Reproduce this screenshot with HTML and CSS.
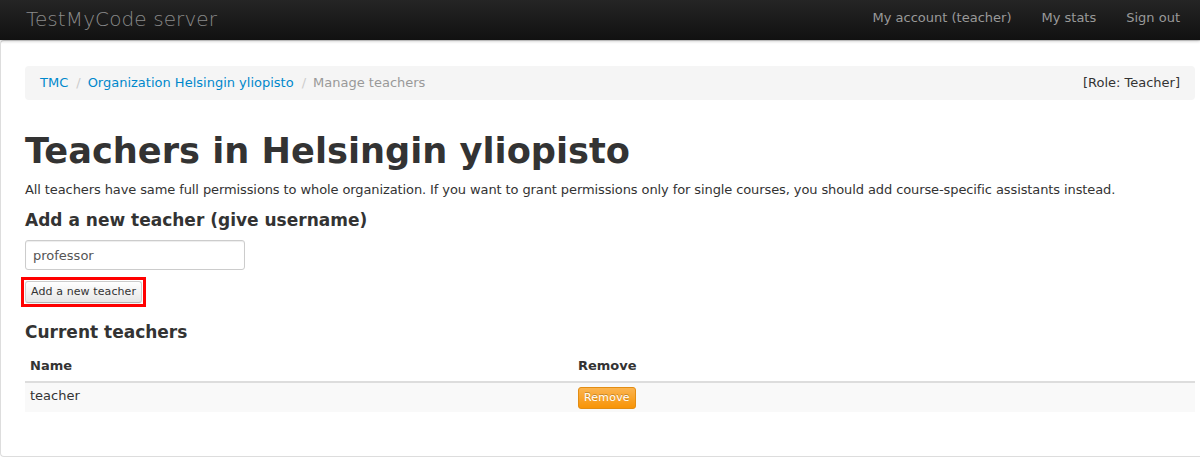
FILE: index.html
```html
<!DOCTYPE html>
<html>
<head>
<meta charset="utf-8">
<link rel="stylesheet" href="styles.css">
</head>
<body>
<div class="navbar">
  <a class="brand">TestMyCode server</a>
  <ul class="nav">
    <li><a>My account (teacher)</a></li>
    <li><a>My stats</a></li>
    <li><a>Sign out</a></li>
  </ul>
</div>
<div class="page">
  <div class="breadcrumb">
    <ul class="crumbs">
      <li><a class="link">TMC</a><span class="divider">/</span></li>
      <li><a class="link">Organization Helsingin yliopisto</a><span class="divider">/</span></li>
      <li class="active">Manage teachers</li>
    </ul>
    <span class="role">[Role: Teacher]</span>
  </div>
  <h1 class="title">Teachers in Helsingin yliopisto</h1>
  <p class="lead-text">All teachers have same full permissions to whole organization. If you want to grant permissions only for single courses, you should add course-specific assistants instead.</p>
  <h4 class="subhead">Add a new teacher (give username)</h4>
  <form class="add-form">
    <input class="text-input" type="text" value="professor">
    <div class="highlight"><button type="button" class="btn">Add a new teacher</button></div>
  </form>
  <h4 class="subhead current">Current teachers</h4>
  <table class="table">
    <thead>
      <tr><th class="col-name">Name</th><th>Remove</th></tr>
    </thead>
    <tbody>
      <tr><td class="col-name">teacher</td><td><button type="button" class="btn-warning">Remove</button></td></tr>
    </tbody>
  </table>
</div>
</body>
</html>
```
FILE: styles.css
```css
html, body {
  margin: 0;
  padding: 0;
  background: #fff;
  font-family: "DejaVu Sans", sans-serif;
  font-size: 13px;
  line-height: 18px;
  color: #333;
}
.navbar {
  height: 40px;
  background: linear-gradient(#252525, #111111);
  box-shadow: 0 1px 3px rgba(0,0,0,0.25);
  display: flex;
  align-items: center;
  justify-content: space-between;
  padding: 0 5px 0 26px;
  position: relative;
  z-index: 1;
}
.brand {
  font-size: 20px;
  font-weight: 200;
  color: #8a8a8a;
  line-height: 20px;
  letter-spacing: 0.1px;
  margin-top: -3px;
}
.nav {
  list-style: none;
  margin: 0;
  padding: 0;
  display: flex;
}
.nav a {
  display: block;
  padding: 10px 15px 11px;
  color: #999;
  font-size: 13px;
  line-height: 16px;
  margin-top: -3px;
}
.page {
  border: 1px solid #ddd;
  border-right: none;
  border-radius: 4px 0 0 4px;
  height: 390px;
  padding: 25px 5px 0 24px;
}
.breadcrumb {
  background: #f5f5f5;
  border-radius: 4px;
  padding: 8px 15px;
  line-height: 18px;
  display: flex;
  justify-content: space-between;
  align-items: center;
}
.crumbs {
  list-style: none;
  margin: 0;
  padding: 0;
  display: flex;
}
.link { color: #0088cc; }
.divider { color: #ccc; padding: 0 7px 0 8px; }
.active { color: #999; }
.role { color: #333; padding-right: 0; }
.title {
  font-size: 35.2px;
  line-height: 40px;
  font-weight: bold;
  margin: 31px 0 0;
  color: #333;
}
.lead-text {
  margin: 10px 0 0;
  letter-spacing: -0.1px;
}
.subhead {
  font-size: 17px;
  line-height: 20px;
  font-weight: bold;
  margin: 11px 0 0;
  color: #333;
}
.add-form {
  margin: 10px 0 0;
}
.text-input {
  display: block;
  box-sizing: border-box;
  width: 220px;
  height: 30px;
  padding: 4px 7px;
  border: 1px solid #ccc;
  border-radius: 3px;
  font-family: "DejaVu Sans", sans-serif;
  font-size: 13px;
  color: #555;
  box-shadow: inset 0 1px 1px rgba(0,0,0,0.075);
  margin: 0;
}
.highlight {
  display: inline-block;
  border: 3px solid #f00;
  padding: 1px;
  margin: 7px 0 0 -4px;
  line-height: 0;
}
.btn {
  font-family: "DejaVu Sans", sans-serif;
  font-size: 11px;
  line-height: 14px;
  padding: 3px 5px;
  height: 22px;
  white-space: nowrap;
  color: #333;
  letter-spacing: 0.1px;
  background: linear-gradient(#ffffff, #e6e6e6);
  border: 1px solid #ccc;
  border-bottom-color: #b3b3b3;
  border-radius: 3px;
  box-shadow: inset 0 1px 0 rgba(255,255,255,0.2), 0 1px 2px rgba(0,0,0,0.05);
}
.current { margin-top: 15px; }
.table {
  width: 100%;
  border-collapse: collapse;
  margin-top: 10px;
}
.table th, .table td {
  text-align: left;
  padding: 5px 5px 6px;
  line-height: 18px;
  vertical-align: top;
}
.table th {
  font-weight: bold;
  border-bottom: 2px solid #ddd;
}
.table tbody td {
  background: #f9f9f9;
  padding: 4px 5px 3px;
}
.col-name { width: 538px; }
.btn-warning {
  font-family: "DejaVu Sans", sans-serif;
  font-size: 11px;
  line-height: 14px;
  height: 22px;
  padding: 2px 5px;
  color: #fff;
  background: linear-gradient(#fbb450, #f89406);
  border: 1px solid #e38d13;
  border-radius: 3px;
  text-shadow: 0 -1px 0 rgba(0,0,0,0.25);
  letter-spacing: 0.2px;
}
```
